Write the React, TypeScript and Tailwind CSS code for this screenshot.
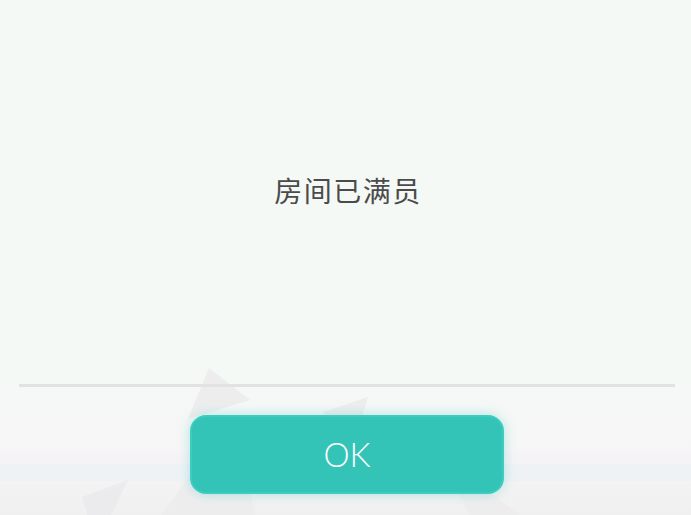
import React from 'react';

const Backdrop: React.FC = () => (
  <svg
    className="absolute inset-0 h-full w-full overflow-visible"
    viewBox="0 0 691 128"
    preserveAspectRatio="none"
  >
    <polygon points="209,-19 250,13 188,32" fill="#ebeaec" opacity="0.8" />
    <polygon points="232,30 256,130 160,130" fill="#ecebec" opacity="0.7" />
    <polygon points="368,10 323,25 350,70" fill="#ebeaec" opacity="0.8" />
    <polygon points="128,93 82,110 88,130 110,130" fill="#e8e7e9" opacity="0.7" />
    <polygon points="430,60 520,128 470,128" fill="#ecebec" opacity="0.6" />
  </svg>
);

export default function App() {
  return (
    <div
      className="flex h-[515px] w-[691px] flex-col overflow-hidden bg-[#f5f9f6]"
      style={{ fontFamily: '"Noto Sans CJK SC", "Noto Sans", sans-serif' }}
    >
      <div className="flex h-[384px] items-center justify-center pb-[4px] pl-[5px]">
        <p className="text-[28px] leading-none tracking-[1.5px] text-[#4b4b4b]">房间已满员</p>
      </div>

      <div className="relative z-10 ml-[19px] mr-[16px] h-[3px] bg-[#e2e2e2]" />

      <div className="relative flex flex-1 justify-center bg-gradient-to-b from-[#f5f8f6] via-[#f6f6f6] to-[#f0f0f0]">
        <div className="absolute inset-x-0 top-[66px] h-[11px] bg-[#f5f3f6]" />
        <div className="absolute inset-x-0 top-[77px] h-[17px] bg-[#eef2f5]" />
        <Backdrop />
        <button className="relative ml-[3px] mt-[28px] flex h-[79px] w-[314px] items-center justify-center rounded-[16px] border-2 border-[#3ccdc2] bg-[#33c3b7] shadow-[0_0_12px_rgba(51,196,184,0.35)]">
          <span
            className="text-[33px] font-light leading-none text-white"
            style={{ fontFamily: 'Lato, "Open Sans", sans-serif' }}
          >
            OK
          </span>
        </button>
      </div>
    </div>
  );
}
